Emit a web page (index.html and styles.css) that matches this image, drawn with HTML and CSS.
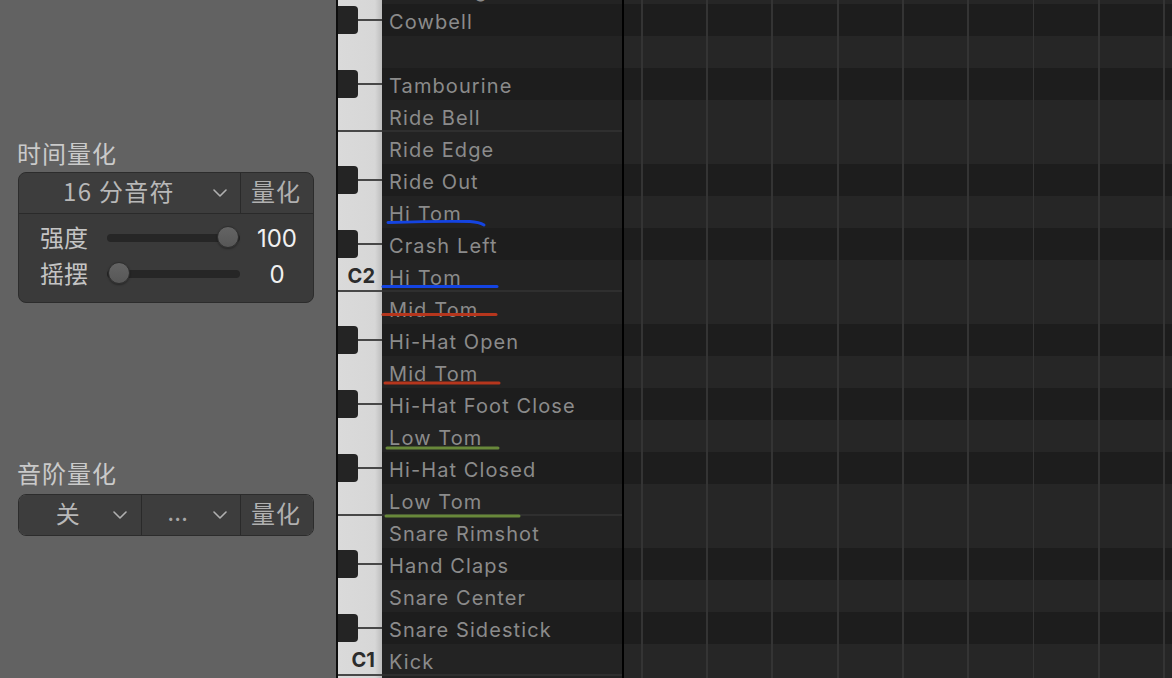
FILE: index.html
```html
<!DOCTYPE html>
<html lang="zh">
<head>
<meta charset="utf-8">
<title>Piano Roll</title>
<link rel="stylesheet" href="styles.css">
</head>
<body>
<aside class="side">
  <div class="title">时间量化</div>
  <div class="qbox">
    <div class="qtop">
      <div class="sel sel-wide"><span class="seltext">16 分音符</span><svg class="chev" width="14" height="8" viewBox="0 0 14 8"><polyline points="1,1 7,7 13,1"/></svg></div>
      <div class="qbtn">量化</div>
    </div>
    <div class="sliders">
      <div class="srow">
        <span class="slabel">强度</span>
        <div class="track"><span class="knob knob-max"></span></div>
        <span class="sval">100</span>
      </div>
      <div class="srow">
        <span class="slabel">摇摆</span>
        <div class="track"><span class="knob knob-min"></span></div>
        <span class="sval">0</span>
      </div>
    </div>
  </div>

  <div class="title title2">音阶量化</div>
  <div class="qbox qbox2">
    <div class="qtop qtop2">
      <div class="sel sel-a"><span class="seltext">关</span><svg class="chev" width="14" height="8" viewBox="0 0 14 8"><polyline points="1,1 7,7 13,1"/></svg></div>
      <div class="sel sel-b"><span class="seltext dots">…</span><svg class="chev" width="14" height="8" viewBox="0 0 14 8"><polyline points="1,1 7,7 13,1"/></svg></div>
      <div class="qbtn">量化</div>
    </div>
  </div>
</aside>

<main class="main">
  <div class="rows">
    <div class="row w"><div class="key"></div><div class="lab">Ride Ring</div><div class="grid"></div></div>
    <div class="row b"><div class="key"><span class="bk"></span><span class="stem"></span></div><div class="lab">Cowbell</div><div class="grid"></div></div>
    <div class="row w"><div class="key"></div><div class="lab"></div><div class="grid"></div></div>
    <div class="row b"><div class="key"><span class="bk"></span><span class="stem"></span></div><div class="lab">Tambourine</div><div class="grid"></div></div>
    <div class="row w edge"><div class="key"></div><div class="lab">Ride Bell</div><div class="grid"></div></div>
    <div class="row w"><div class="key"></div><div class="lab">Ride Edge</div><div class="grid"></div></div>
    <div class="row b"><div class="key"><span class="bk"></span><span class="stem"></span></div><div class="lab">Ride Out</div><div class="grid"></div></div>
    <div class="row w"><div class="key"></div><div class="lab">Hi Tom</div><div class="grid"></div></div>
    <div class="row b"><div class="key"><span class="bk"></span><span class="stem"></span></div><div class="lab">Crash Left</div><div class="grid"></div></div>
    <div class="row w edge"><div class="key"><span class="oct">C2</span></div><div class="lab">Hi Tom</div><div class="grid"></div></div>
    <div class="row w"><div class="key"></div><div class="lab">Mid Tom</div><div class="grid"></div></div>
    <div class="row b"><div class="key"><span class="bk"></span><span class="stem"></span></div><div class="lab">Hi-Hat Open</div><div class="grid"></div></div>
    <div class="row w"><div class="key"></div><div class="lab">Mid Tom</div><div class="grid"></div></div>
    <div class="row b"><div class="key"><span class="bk"></span><span class="stem"></span></div><div class="lab">Hi-Hat Foot Close</div><div class="grid"></div></div>
    <div class="row w"><div class="key"></div><div class="lab">Low Tom</div><div class="grid"></div></div>
    <div class="row b"><div class="key"><span class="bk"></span><span class="stem"></span></div><div class="lab">Hi-Hat Closed</div><div class="grid"></div></div>
    <div class="row w edge"><div class="key"></div><div class="lab">Low Tom</div><div class="grid"></div></div>
    <div class="row w"><div class="key"></div><div class="lab">Snare Rimshot</div><div class="grid"></div></div>
    <div class="row b"><div class="key"><span class="bk"></span><span class="stem"></span></div><div class="lab">Hand Claps</div><div class="grid"></div></div>
    <div class="row w"><div class="key"></div><div class="lab">Snare Center</div><div class="grid"></div></div>
    <div class="row b"><div class="key"><span class="bk"></span><span class="stem"></span></div><div class="lab">Snare Sidestick</div><div class="grid"></div></div>
    <div class="row w edge"><div class="key"><span class="oct">C1</span></div><div class="lab">Kick</div><div class="grid"></div></div>
    <div class="row w"><div class="key"></div><div class="lab"></div><div class="grid"></div></div>
  </div>

  <svg class="marks" width="834" height="678" viewBox="0 0 834 678">
    <path class="blue" d="M50 222.5 Q100 221 132 221.5 Q141 222 146 225"/>
    <path class="blue" d="M45 286.5 L159 286.5"/>
    <path class="red" d="M45 314.5 L158 314.5"/>
    <path class="red" d="M47 383 L161 383"/>
    <path class="green" d="M49 448 L160 448"/>
    <path class="green" d="M48 516 L181 516"/>
  </svg>
</main>
</body>
</html>
```

FILE: styles.css
```css
html, body {
  margin: 0;
  padding: 0;
}
body {
  width: 1172px;
  height: 678px;
  overflow: hidden;
  display: flex;
  background: #1d1d1d;
  font-family: "Inter", "Noto Sans CJK SC", sans-serif;
}

/* ---------- left panel ---------- */
.side {
  width: 336px;
  flex: none;
  box-sizing: border-box;
  background: #626262;
  padding: 137px 0 0 18px;
  font-family: "Noto Sans CJK SC", "Inter", sans-serif;
}
.title {
  height: 32px;
  line-height: 32px;
  font-size: 24px;
  letter-spacing: 1px;
  color: #cacaca;
  margin-left: -1px;
}
.title2 {
  margin-top: 154px;
}
.qbox {
  width: 296px;
  box-sizing: border-box;
  margin-top: 3px;
  border: 1px solid #2c2c2c;
  border-radius: 8px;
  background: #3a3a3a;
  overflow: hidden;
}
.qbox2 {
  margin-top: 5px;
}
.qtop {
  display: flex;
  height: 40px;
  background: #3d3d3d;
  border-bottom: 1px solid #2a2a2a;
}
.qtop2 {
  border-bottom: none;
}
.sel {
  display: flex;
  align-items: center;
  box-sizing: border-box;
  border-right: 1px solid #2a2a2a;
  padding-right: 13px;
}
.sel-wide { width: 222px; padding-left: 6px; }
.sel-a { width: 123px; padding-left: 5px; padding-right: 14px; }
.sel-b { width: 99px; padding-left: 0; }
.seltext {
  flex: 1;
  text-align: center;
  font-size: 24px;
  letter-spacing: 1.3px;
  color: #b8b8b8;
  line-height: 36px;
  padding-bottom: 4px;
}
.dots {
  color: #a8a8a8;
  font-family: "Inter", sans-serif;
  font-size: 24px;
  letter-spacing: 0;
}
.chev {
  flex: none;
  fill: none;
  stroke: #b0b0b0;
  stroke-width: 1.6;
  stroke-linecap: round;
  stroke-linejoin: round;
}
.qbtn {
  flex: 1;
  text-align: center;
  line-height: 36px;
  font-size: 24px;
  letter-spacing: 1px;
  color: #b0b0b0;
  padding-right: 2px;
}
.sliders {
  padding: 6px 0 10px 0;
}
.srow {
  display: flex;
  align-items: center;
  height: 36px;
}
.slabel {
  width: 50px;
  margin-left: 21px;
  font-size: 24px;
  line-height: 32px;
  padding-bottom: 3px;
  color: #c4c4c4;
}
.track {
  position: relative;
  width: 133px;
  height: 8px;
  margin-left: 17px;
  border-radius: 4px;
  background: #262626;
}
.knob {
  position: absolute;
  top: -8px;
  width: 22px;
  height: 22px;
  box-sizing: border-box;
  border-radius: 50%;
  border: 1px solid #2e2e2e;
  background: linear-gradient(180deg, #646464 0%, #575757 100%);
  box-shadow: 0 1px 2px rgba(0,0,0,0.35);
}
.knob-max { left: 110px; }
.knob-min { left: 1px; }
.sval {
  width: 64px;
  margin-left: 5px;
  text-align: center;
  font-family: "Inter", sans-serif;
  font-size: 24px;
  color: #f0f0f0;
}

/* ---------- piano roll ---------- */
.main {
  position: relative;
  flex: 1;
  border-left: 2px solid #0d0d0d;
  overflow: hidden;
}
.rows {
  display: flex;
  flex-direction: column;
  margin-top: -28px;
}
.row {
  display: flex;
  height: 32px;
  flex: none;
}
.key {
  width: 44px;
  flex: none;
  display: flex;
  align-items: center;
  justify-content: flex-end;
  background: linear-gradient(90deg, #dadada 0, #d7d7d7 37px, #bdbdbd 44px);
}
.b .key {
  justify-content: flex-start;
}
.bk {
  width: 20px;
  height: 28px;
  flex: none;
  background: #242424;
  border-radius: 0 4px 4px 0;
}
.stem {
  flex: 1;
  height: 2px;
  background: #474747;
}
.edge .key {
  box-shadow: inset 0 -2px 0 #474747;
}
.oct {
  font-family: "Inter", sans-serif;
  font-weight: 700;
  font-size: 20px;
  color: #2c2c2c;
  padding-right: 7px;
}
.lab {
  width: 242px;
  flex: none;
  box-sizing: border-box;
  border-right: 2px solid #000;
  padding: 3px 0 0 7px;
  background: #232323;
  color: #8b8b8b;
  font-size: 20px;
  letter-spacing: 1.1px;
  line-height: 30px;
  white-space: nowrap;
  overflow: hidden;
}
.b .lab {
  background: #1d1d1d;
}
.edge .lab {
  box-shadow: inset 0 -2px 0 #2f2f2f;
}
.grid {
  flex: 1;
  background-color: #262626;
  background-image: repeating-linear-gradient(90deg,
    transparent 0, transparent 17px,
    #343434 17px, #343434 19px,
    transparent 19px, transparent 65.25px);
}
.b .grid {
  background-color: #1d1d1d;
}
.marks {
  position: absolute;
  left: 0;
  top: 0;
  pointer-events: none;
  fill: none;
  stroke-width: 3;
  stroke-linecap: round;
}
.blue { stroke: #1444e2; }
.red { stroke: #b6361d; }
.green { stroke: #68883a; }
```
